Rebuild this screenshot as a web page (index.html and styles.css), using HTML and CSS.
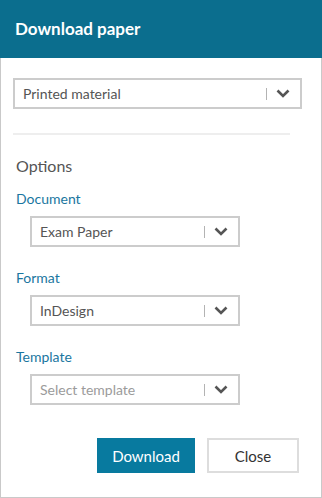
FILE: index.html
```html
<!DOCTYPE html>
<html lang="en">
  <head>
    <meta charset="UTF-8" />
    <meta name="viewport" content="width=device-width, initial-scale=1.0" />
    <title>Download paper</title>
    <link rel="stylesheet" href="styles.css">
  </head>
  <body>
    <div class="dialog">
      <div class="dialog-header">Download paper</div>
      <div class="dialog-body">
        <div class="select select-wide">
          <span class="select-value">Printed material</span>
          <span class="select-sep"></span>
          <svg class="select-arrow" width="14" height="9" viewBox="0 0 14 9">
            <path d="M1.5 1.5 L7 7 L12.5 1.5" fill="none" stroke="#555" stroke-width="2.6" />
          </svg>
        </div>
        <hr class="divider" />
        <h2 class="options-title">Options</h2>

        <label class="field-label">Document</label>
        <div class="select">
          <span class="select-value">Exam Paper</span>
          <span class="select-sep"></span>
          <svg class="select-arrow" width="14" height="9" viewBox="0 0 14 9">
            <path d="M1.5 1.5 L7 7 L12.5 1.5" fill="none" stroke="#555" stroke-width="2.6" />
          </svg>
        </div>

        <label class="field-label">Format</label>
        <div class="select">
          <span class="select-value">InDesign</span>
          <span class="select-sep"></span>
          <svg class="select-arrow" width="14" height="9" viewBox="0 0 14 9">
            <path d="M1.5 1.5 L7 7 L12.5 1.5" fill="none" stroke="#555" stroke-width="2.6" />
          </svg>
        </div>

        <label class="field-label">Template</label>
        <div class="select">
          <span class="select-value placeholder">Select template</span>
          <span class="select-sep"></span>
          <svg class="select-arrow" width="14" height="9" viewBox="0 0 14 9">
            <path d="M1.5 1.5 L7 7 L12.5 1.5" fill="none" stroke="#555" stroke-width="2.6" />
          </svg>
        </div>

        <div class="actions">
          <button class="btn btn-primary">Download</button>
          <button class="btn btn-default">Close</button>
        </div>
      </div>
    </div>
  </body>
</html>
```

FILE: styles.css
```css
body {
  margin: 0;
  background: #ffffff;
  font-family: Lato, "Open Sans", sans-serif;
}
.dialog {
  width: 322px;
  height: 498px;
  box-sizing: border-box;
  border: 1px solid #c9c9c9;
  border-top: none;
  display: flex;
  flex-direction: column;
}
.dialog-header {
  height: 58px;
  background-color: #0b6e8e;
  color: #ffffff;
  font-weight: bold;
  font-size: 17px;
  line-height: 58px;
  padding-left: 15px;
  margin: 0 -1px;
}
.dialog-body {
  display: flex;
  flex-direction: column;
  padding: 20px 0 0 12px;
}
.select {
  display: flex;
  align-items: center;
  box-sizing: border-box;
  width: 210px;
  height: 31px;
  margin-left: 17px;
  border: 2px solid #cccccc;
  padding: 0 10px 0 8px;
}
.select-wide {
  width: 289px;
  margin-left: 0;
}
.select-value {
  flex: 1;
  font-size: 14px;
  color: #555555;
}
.placeholder {
  color: #9b9b9b;
}
.select-sep {
  width: 1px;
  height: 12px;
  background-color: #b3b3b3;
  margin-right: 9px;
}
.select-arrow {
  display: block;
}
.divider {
  width: 277px;
  margin: 24px 0 0 0;
  border: none;
  height: 2px;
  background-color: #eeeeee;
}
.options-title {
  margin: 21px 0 0 3px;
  font-size: 16px;
  line-height: 20px;
  font-weight: normal;
  color: #555555;
}
.field-label {
  margin: 14px 0 8px 3px;
  font-size: 14px;
  line-height: 18px;
  color: #1a76a0;
}
.select + .field-label {
  margin-top: 22px;
}
.actions {
  display: flex;
  justify-content: flex-end;
  gap: 12px;
  margin: 33px 22px 0 0;
}
.btn {
  height: 35px;
  font-family: Lato, "Open Sans", sans-serif;
  font-size: 15px;
  box-sizing: border-box;
  cursor: pointer;
}
.btn-primary {
  width: 98px;
  background-color: #087a9f;
  border: none;
  color: #ffffff;
}
.btn-default {
  width: 92px;
  background-color: #ffffff;
  border: 2px solid #dddddd;
  color: #333333;
}
```
